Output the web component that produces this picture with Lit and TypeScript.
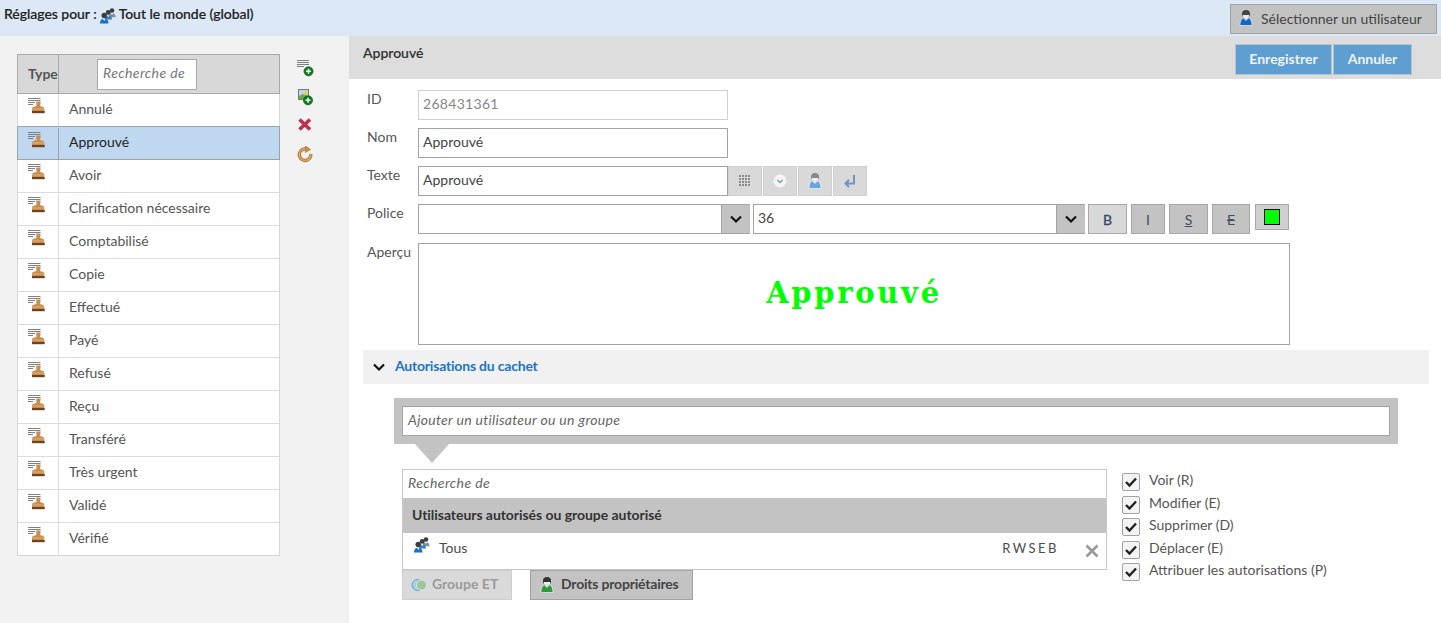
import { LitElement, html, css, svg } from "lit";
import { customElement } from "lit/decorators.js";

const ITEMS = ["Annulé","Approuvé","Avoir","Clarification nécessaire","Comptabilisé","Copie","Effectué","Payé","Refusé","Reçu","Transféré","Très urgent","Validé","Vérifié"];
const PERMS = ["Voir (R)","Modifier (E)","Supprimer (D)","Déplacer (E)","Attribuer les autorisations (P)"];

const stamp = html`<svg width="17" height="16" viewBox="0 0 17 16"><path d="M0 .5h12.500M0 2.500h12.500M0 4.500h7M0 6.500h5" stroke="#808080" stroke-width="1" fill="none"/><path d="M8.300 3.500h4.200v2.200l-.6 2.300 3.500 1 .8 1.500V14H4v-3.500l.8-1.500 3.700-1-.2-2.300z" fill="#c98d4e"/><path d="M4 11h12.500" stroke="#e0b27e" stroke-width="1"/><rect x="4" y="13" width="12.700" height="2.200" fill="#6b4423"/></svg>`;

const person = (x: number, y: number, c: string, s = 1) => svg`<g transform="translate(${x} ${y}) scale(${s})"><circle cx="5" cy="3.500" r="3.200" fill="#3c3c3c"/><path d="M0 13c0-4 2-5.500 5-5.500s5 1.500 5 5.500z" fill="${c}"/><path d="M3.500 7.500h3L5 10z" fill="#fff"/></g>`;

const group = html`<svg width="16" height="16" viewBox="0 0 18 18">${person(9.500, 0, "#7d8ea3", .8)}${person(5, 2, "#3f79bd", .85)}${person(0, 5, "#1a6fd0", .95)}</svg>`;
const user = (c: string, h = "#333") => html`<svg width="16" height="18" viewBox="0 0 16 18"><circle cx="8" cy="5" r="4" fill="${h}"/><path d="M5 6h6v2l-3 2-3-2z" fill="#eee"/><path d="M2 16.500c0-5 2-7.500 3.500-7.500L8 11.500 10.500 9c1.500 0 3.500 2.500 3.500 7.500z" fill="${c}" stroke="#fff" stroke-width=".6"/></svg>`;
const addBadge = (x: number, y: number) => svg`<circle cx="${x}" cy="${y}" r="4.600" fill="#0e7d1e" stroke="#0a5a14" stroke-width=".6"/><path d="M${x - 2.500} ${y}h5M${x} ${y - 2.500}v5" stroke="#fff" stroke-width="1.500"/>`;
const chevron = html`<svg width="14" height="10" viewBox="0 0 14 10"><path d="M2 2.500l5 5 5-5" fill="none" stroke="#111" stroke-width="2.200"/></svg>`;

@customElement("app-root")
export class AppRoot extends LitElement {
  static styles = css`
    :host { display: block; width: 1441px; height: 623px; overflow: hidden; background: #fff; font-family: "Lato", "Noto Sans", sans-serif; font-size: 14px; color: #4a4a4a; box-sizing: border-box; }
    * { box-sizing: border-box; }
    svg { display: block; flex: none; }
    .top { height: 36px; background: #dde8f6; display: flex; justify-content: space-between; padding: 3px 4px 0 4px; }
    .who { display: flex; align-items: flex-start; gap: 3px; color: #222; font-weight: 500; line-height: 22px; -webkit-text-stroke: .2px #222; letter-spacing: -.04px; }
    .who svg { margin-top: 5px; }
    .btn-user { width: 207px; height: 30px; margin-top: 1px; background: #c3c3c3; border: 1px solid #a3a3a3; display: flex; align-items: center; gap: 7px; padding: 0 0 2px 7px; color: #444; }
    .main { display: grid; grid-template-columns: 349px 1fr; height: 587px; }
    .left { background: #f2f2f2; padding: 18px 0 0 17px; display: flex; gap: 16px; align-items: flex-start; }
    .table { width: 263px; background: #fff; border: 1px solid #d8d8d8; border-top: 0; }
    .thead { height: 40px; background: #d8d8d8; border: 1px solid #a9a9a9; display: grid; grid-template-columns: 41px 1fr; margin: 0 -1px; }
    .thead .type { border-right: 1px solid #a9a9a9; font-weight: 700; display: flex; align-items: center; padding: 0 0 2px 10px; color: #555; letter-spacing: -.1px; }
    .search { display: flex; align-items: center; padding-left: 38px; }
    .search div { width: 100px; height: 31px; background: #fff; border: 1px solid #a9a9a9; font-style: italic; color: #777; display: flex; align-items: center; padding: 0 0 3px 5px; letter-spacing: .4px; white-space: nowrap; }
    .row { height: 33px; display: grid; grid-template-columns: 41px 1fr; border-bottom: 1px solid #dcdcdc; }
    .row:last-child { border-bottom: 0; height: 32px; }
    .row .ic { border-right: 1px solid #dcdcdc; padding: 4px 0 0 10px; }
    .row .tx { display: flex; align-items: center; padding: 0 0 4px 10px; color: #555; }
    .row.sel { background: #bfd8ef; border: 1px solid #9aa4ae; margin: -1px -1px 0; height: 34px; padding-top: 1px; }
    .row.sel .ic { border-right-color: #9aa4ae; }
    .row.sel .tx { color: #222; }
    .tools { display: flex; flex-direction: column; gap: 11px; padding-top: 5px; }
    .right { padding: 0; position: relative; }
    .title { height: 43px; background: #dddddd; display: flex; justify-content: space-between; padding: 8px 29px 0 14px; color: #333; font-weight: 500; -webkit-text-stroke: .2px #333; }
    .title .acts { display: flex; gap: 1px; -webkit-text-stroke: 0; }
    .blue { height: 31px; background: #5f9ed1; border: 1px solid #b5c4d1; color: #eef4fa; font-weight: 700; display: flex; align-items: center; justify-content: center; padding-bottom: 2px; }
    .form { padding: 11px 0 0 14px; }
    .f { display: flex; margin-bottom: 8px; align-items: flex-start; height: 30px; }
    .f > label { width: 55px; padding: 0 0 0 4px; line-height: 18px; color: #555; }
    .inp { width: 310px; height: 30px; background: #fff; border: 1px solid #a3a3a3; display: flex; align-items: center; padding: 0 0 3px 4px; color: #444; }
    .inp.dis { border-color: #cfcfcf; color: #888; letter-spacing: .3px; }
    .ib { width: 34px; height: 30px; background: #d9d9d9; border: 1px solid #cfcfcf; display: flex; align-items: center; justify-content: center; margin-right: 1px; }
    .sel-box { width: 332px; height: 30px; background: #fff; border: 1px solid #a3a3a3; display: flex; justify-content: space-between; align-items: stretch; padding-left: 4px; color: #444; line-height: 25px; }
    .sel-box + .sel-box { margin-left: 3px; }
    .sel-box i { width: 29px; margin-right: -1px; background: #c3c3c3; border-left: 1px solid #a3a3a3; display: flex; align-items: center; justify-content: center; }
    .fb { height: 30px; background: #c3c3c3; border: 1px solid #a8a8a8; display: flex; align-items: center; justify-content: center; color: #3f4d5c; margin-left: 4px; }
    .fb.b { width: 39px; background: #d8d8d8; margin-left: 3px; color: #2f4a68; -webkit-text-stroke: .3px #2f4a68; }
    .fb.i { width: 34px; }
    .fb.s { width: 39px; text-decoration: underline; }
    .fb.e { width: 38px; text-decoration: line-through; }
    .swatch { width: 34px; height: 26px; background: #d0d0d0; border: 1px solid #a8a8a8; margin-left: 5px; display: flex; align-items: center; justify-content: center; }
    .swatch div { width: 16px; height: 16px; background: #00ff00; border: 1px solid #000; }
    .preview-row { display: flex; height: 102px; margin-top: 9px; margin-bottom: 5px; }
    .preview-row > label { width: 55px; padding: 0 0 0 4px; line-height: 18px; color: #555; }
    .preview { width: 872px; height: 102px; border: 1px solid #a3a3a3; display: flex; align-items: center; justify-content: center; font: bold 29px "DejaVu Serif", serif; letter-spacing: 2.700px; color: #00ff00; padding-bottom: 2px; }
    .sec { width: 1066px; height: 34px; background: #f1f1f1; display: flex; align-items: center; gap: 9px; padding: 0 0 3px 9px; color: #1f74c7; font-weight: 700; letter-spacing: -.2px; }
    .sec svg { margin-top: 3px; }
    .addbox { margin: 14px 0 0 31px; width: 1004px; height: 46px; background: #c3c3c3; padding: 8px; position: relative; }
    .addbox div.i { height: 30px; background: #fff; border: 1px solid #a3a3a3; font-style: italic; color: #666; display: flex; align-items: center; padding: 0 0 3px 5px; letter-spacing: .3px; }
    .addbox::after { content: ""; position: absolute; left: 21px; top: 46px; border: 17px solid transparent; border-top: 19px solid #c3c3c3; border-bottom: 0; }
    .perm { display: flex; margin: 25px 0 0 39px; }
    .pl { width: 705px; }
    .list { height: 101px; border: 1px solid #c8c8c8; }
    .list .s { height: 28px; font-style: italic; color: #666; display: flex; align-items: center; padding: 0 0 3px 5px; letter-spacing: .4px; }
    .list .h { height: 35px; background: #c3c3c3; color: #333; font-weight: 700; display: flex; align-items: center; padding: 0 0 3px 9px; letter-spacing: -.05px; }
    .list .r { height: 36px; display: flex; align-items: flex-start; padding: 2px 7px 0 11px; }
    .list .r svg:first-child { margin-top: 2px; }
    .list .r span { line-height: 26px; margin-left: 9px; }
    .list .r .rw { margin-left: auto; letter-spacing: 2.500px; font-size: 13px; margin-right: 26px; }
    .list .r .x { margin-left: 0; margin-top: 9px; }
    .bt { display: flex; gap: 18px; }
    .gb { height: 30px; display: flex; align-items: center; gap: 4px; font-weight: 700; padding: 0 0 3px 8px; }
    .gb svg { margin-top: 3px; }
    .gb.a { width: 110px; background: #dadada; border: 1px solid #cfcfcf; color: #9a9a9a; }
    .gb.b { width: 163px; background: #c3c3c3; border: 1px solid #a3a3a3; color: #444; gap: 6px; letter-spacing: -.2px; }
    .checks { margin: 4px 0 0 15px; display: flex; flex-direction: column; gap: 4.500px; }
    .c { display: flex; align-items: flex-start; height: 18px; gap: 9px; color: #555; line-height: 13px; }
    .box { width: 18px; height: 18px; border: 1px solid #a3a3a3; border-radius: 2px; background: #f4f4f4; display: flex; align-items: center; justify-content: center; }
  `;

  render() {
    return html`
      <div class="top">
        <div class="who">Réglages pour : ${group} Tout le monde (global)</div>
        <div class="btn-user">${user("#1268c8", "#444")} Sélectionner un utilisateur</div>
      </div>
      <div class="main">
        <div class="left">
          <div class="table">
            <div class="thead"><div class="type">Type</div><div class="search"><div>Recherche de</div></div></div>
            ${ITEMS.map((t) => html`<div class="row ${t === "Approuvé" ? "sel" : ""}"><div class="ic">${stamp}</div><div class="tx">${t}</div></div>`)}
          </div>
          <div class="tools">
            <svg width="18" height="18" viewBox="0 0 18 18"><path d="M1 1.500h12M1 3.500h12M1 5.500h12M1 7.500h7" stroke="#808080"/>${addBadge(12.500, 12.300)}</svg>
            <svg width="18" height="18" viewBox="0 0 18 18"><rect x="2.500" y="1.500" width="10" height="10" fill="#bcd8e8" stroke="#777"/><path d="M3 8l4-2 5 2v3H3z" fill="#6fa84a"/><rect x="8.500" y="3" width="3" height="3" fill="#f2d21f"/>${addBadge(12, 12.300)}</svg>
            <svg width="18" height="18" viewBox="0 0 18 18"><path d="M3.500 2.500l10.500 10M14 2.500L3.500 12.500" stroke="#c2304f" stroke-width="3.600"/></svg>
            <svg width="18" height="18" viewBox="0 0 18 18"><path d="M11 3.200A5.800 5.800 0 1 0 14.800 8" fill="none" stroke="#a86f30" stroke-width="3.400"/><path d="M11 3.200A5.800 5.800 0 1 0 14.800 8" fill="none" stroke="#dba96e" stroke-width="1.600"/><path d="M9.500 0l5 3.500-5 3z" fill="#c98d4e" stroke="#a86f30" stroke-width=".6"/></svg>
          </div>
        </div>
        <div class="right">
          <div class="title">Approuvé
            <div class="acts"><div class="blue" style="width:97px">Enregistrer</div><div class="blue" style="width:79px">Annuler</div></div>
          </div>
          <div class="form">
            <div class="f"><label>ID</label><div class="inp dis">268431361</div></div>
            <div class="f"><label>Nom</label><div class="inp">Approuvé</div></div>
            <div class="f"><label>Texte</label><div class="inp">Approuvé</div>
              <div class="ib"><svg width="12" height="12" viewBox="0 0 12 12" fill="#8a8a8a"><path d="M0 0h2v2H0zM3 0h2v2H3zM6 0h2v2H6zM9 0h2v2H9zM0 3h2v2H0zM3 3h2v2H3zM6 3h2v2H6zM9 3h2v2H9zM0 6h2v2H0zM3 6h2v2H3zM6 6h2v2H6zM9 6h2v2H9zM0 9h2v2H0zM3 9h2v2H3zM6 9h2v2H6zM9 9h2v2H9z"/></svg></div>
              <div class="ib"><svg width="14" height="14" viewBox="0 0 14 14"><circle cx="7" cy="7" r="6.500" fill="#f4f4f4"/><path d="M4.500 6l2.500 2.500L9.500 6" fill="none" stroke="#7f9cc0" stroke-width="1.400"/></svg></div>
              <div class="ib">${user("#6aa6dc", "#888")}</div>
              <div class="ib"><svg width="14" height="16" viewBox="0 0 14 16"><path d="M11 2v8.500H3M6 7l-3.500 3.500L6 14" fill="none" stroke="#6d93bf" stroke-width="2"/></svg></div>
            </div>
            <div class="f"><label>Police</label>
              <div class="sel-box"><span></span><i>${chevron}</i></div>
              <div class="sel-box"><span>36</span><i>${chevron}</i></div>
              <div class="fb b">B</div>
              <div class="fb i">I</div>
              <div class="fb s">S</div>
              <div class="fb e">E</div>
              <div class="swatch"><div></div></div>
            </div>
            <div class="preview-row"><label>Aperçu</label><div class="preview">Approuvé</div></div>
          </div>
          <div style="padding-left:14px">
            <div class="sec">${chevron}Autorisations du cachet</div>
            <div class="addbox"><div class="i">Ajouter un utilisateur ou un groupe</div></div>
            <div class="perm">
              <div class="pl">
                <div class="list">
                  <div class="s">Recherche de</div>
                  <div class="h">Utilisateurs autorisés ou groupe autorisé</div>
                  <div class="r">${group}<span>Tous</span><span class="rw">RWSEB</span><svg class="x" width="14" height="14" viewBox="0 0 14 14"><path d="M1.500 1.500l11 11M12.500 1.500l-11 11" stroke="#999" stroke-width="2.600"/></svg></div>
                </div>
                <div class="bt">
                  <div class="gb a"><svg width="17" height="14" viewBox="0 0 17 14"><circle cx="6.500" cy="7" r="5.500" fill="#a9d0e8" stroke="#5da3cf"/><circle cx="10.500" cy="7" r="5" fill="#9bc79b" stroke="#d8e8d8"/></svg>Groupe ET</div>
                  <div class="gb b">${user("#2f9a3a", "#333")}Droits propriétaires</div>
                </div>
              </div>
              <div class="checks">
                ${PERMS.map((p) => html`<div class="c"><div class="box"><svg width="14" height="12" viewBox="0 0 14 12"><path d="M2 6l3.500 3.500L12 2.500" fill="none" stroke="#222" stroke-width="2.400"/></svg></div>${p}</div>`)}
              </div>
            </div>
          </div>
        </div>
      </div>
    `;
  }
}
